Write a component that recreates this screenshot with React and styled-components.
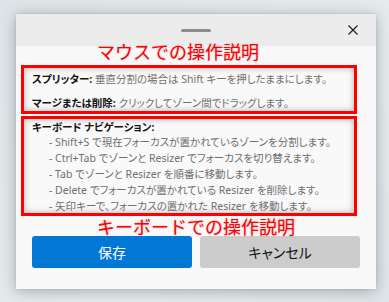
import React from "react";
import styled, { createGlobalStyle } from "styled-components";

const Global = createGlobalStyle`
  html, body { margin: 0; padding: 0; }
  body {
    width: 389px;
    height: 302px;
    overflow: hidden;
    background: linear-gradient(135deg, #dde4e7 0%, #e6ecee 60%, #dfe6e9 100%);
    font-family: "Noto Sans", "Noto Sans CJK JP", sans-serif;
  }
`;

const Page = styled.div`
  padding: 14px 13px 0 16px;
`;

const Dialog = styled.div`
  width: 360px;
  height: 275px;
  background: #f9f9f9;
  box-shadow: 0 2px 14px rgba(0, 0, 0, 0.28), 0 0 2px rgba(0, 0, 0, 0.12);
  display: flex;
  flex-direction: column;
`;

const Header = styled.div`
  height: 32px;
  flex: none;
  background: #ececec;
  display: grid;
  grid-template-columns: 1fr auto 1fr;
  align-items: center;
`;

const Handle = styled.div`
  grid-column: 2;
  width: 30px;
  height: 3px;
  border-radius: 2px;
  background: #8c8c8c;
`;

const Close = styled.button`
  grid-column: 3;
  justify-self: end;
  margin-right: 18px;
  width: 10px;
  height: 10px;
  padding: 0;
  border: 0;
  background: transparent;
  display: flex;
  align-items: center;
  justify-content: center;
`;

const Annotation = styled.div`
  font-family: "Noto Sans CJK JP", sans-serif;
  font-size: 18px;
  line-height: 20px;
  height: 20px;
  color: #ff0000;
  text-shadow: 0 0 2px rgba(120, 0, 0, 0.35);
  margin: ${(p) => p.$top}px 0 0 81px;
  position: relative;
  white-space: nowrap;
`;

const Box = styled.div`
  margin: ${(p) => p.$top}px 0 0 5px;
  width: 322px;
  height: ${(p) => p.$h}px;
  border: 3px solid #ff0000;
  box-shadow: inset 0 0 6px rgba(0, 0, 0, 0.3);
  padding: ${(p) => p.$pt}px 0 0 8px;
  box-sizing: content-box;
  display: flex;
  flex-direction: column;
  gap: ${(p) => p.$gap}px;
  font-size: 10.5px;
  font-feature-settings: "palt";
  white-space: nowrap;
`;

const Line = styled.div`
  line-height: ${(p) => p.$lh || 16}px;
  color: #6f6f6f;
  padding-left: ${(p) => (p.$indent ? 17 : 0)}px;
`;

const Label = styled.span`
  color: #111;
  font-weight: 700;
`;

const Buttons = styled.div`
  display: grid;
  grid-template-columns: 1fr 1fr;
  gap: 8px;
  padding: 0 16px;
`;

const Button = styled.button`
  height: 32px;
  border: 0;
  border-radius: 3px;
  font-family: "Noto Sans CJK JP", sans-serif;
  font-feature-settings: "palt";
  font-size: 14px;
  background: ${(p) => (p.$primary ? "#0078d4" : "#cccccc")};
  color: ${(p) => (p.$primary ? "#ffffff" : "#111111")};
`;

export default function App() {
  return (
    <>
      <Global />
      <Page>
        <Dialog>
          <Header>
            <Handle />
            <Close aria-label="close">
              <svg width="10" height="10" viewBox="0 0 10 10">
                <path d="M0.5 0.5 L9.5 9.5 M9.5 0.5 L0.5 9.5" stroke="#1a1a1a" strokeWidth="1.1" />
              </svg>
            </Close>
          </Header>
          <Annotation $top={-5}>マウスでの操作説明</Annotation>
          <Box $top={4} $h={40} $pt={3} $gap={8}>
            <Line>
              <Label>スプリッター:</Label> 垂直分割の場合は Shift キーを押したままにします。
            </Line>
            <Line>
              <Label>マージまたは削除:</Label> クリックしてゾーン間でドラッグします。
            </Line>
          </Box>
          <Box $top={2} $h={93} $pt={1} $gap={0}>
            <Line $lh={14}>
              <Label>キーボード ナビゲーション:</Label>
            </Line>
            <Line $indent>- Shift+S で現在フォーカスが置かれているゾーンを分割します。</Line>
            <Line $indent>- Ctrl+Tab でゾーンと Resizer でフォーカスを切り替えます。</Line>
            <Line $indent>- Tab でゾーンと Resizer を順番に移動します。</Line>
            <Line $indent>- Delete でフォーカスが置かれている Resizer を削除します。</Line>
            <Line $indent>- 矢印キーで、フォーカスの置かれた Resizer を移動します。</Line>
          </Box>
          <Annotation $top={0}>キーボードでの操作説明</Annotation>
          <Buttons>
            <Button $primary>保存</Button>
            <Button>キャンセル</Button>
          </Buttons>
        </Dialog>
      </Page>
    </>
  );
}
